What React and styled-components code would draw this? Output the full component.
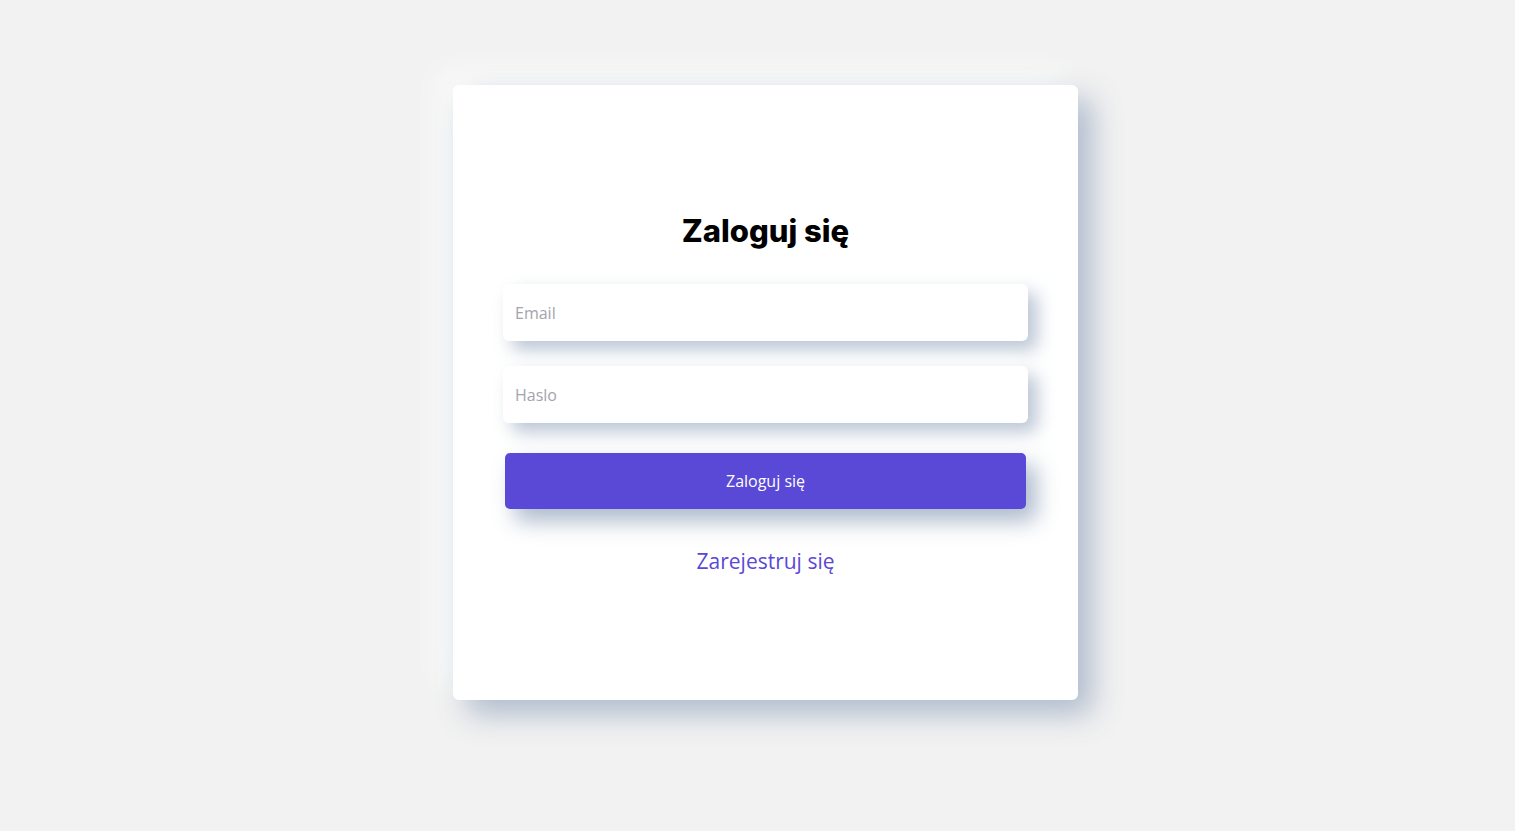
import React from 'react';
import styled, { createGlobalStyle } from 'styled-components';

const GlobalStyle = createGlobalStyle`
  body {
    margin: 0;
    background: #f2f2f2;
    font-family: "Open Sans", Roboto, sans-serif;
  }
`;

const StyledPage = styled.div`
  display: flex;
  justify-content: center;
  min-height: 831px;
  padding: 85px 0 0 16px;
  box-sizing: border-box;
`;

const StyledCard = styled.div`
  display: flex;
  flex-direction: column;
  justify-content: center;
  align-items: center;
  width: 625px;
  height: 615px;
  padding: 2px 50px 0;
  box-sizing: border-box;
  background: #fff;
  border-radius: 6px;
  box-shadow: 14px 14px 30px rgba(163, 177, 198, 0.85), -14px -14px 30px rgba(255, 255, 255, 0.7);
`;

const StyledTitle = styled.h1`
  margin: 0 0 35px;
  font-family: Inter, "Noto Sans", sans-serif;
  font-weight: 800;
  font-size: 31px;
  color: #000;
`;

const StyledInput = styled.input`
  width: 100%;
  height: 57px;
  margin-bottom: 25px;
  padding: 0 12px;
  box-sizing: border-box;
  border: none;
  outline: none;
  border-radius: 6px;
  background: #fff;
  font-family: "Open Sans", sans-serif;
  font-size: 16px;
  color: #333;
  box-shadow: 9px 9px 18px rgba(163, 177, 198, 0.75), -6px -6px 14px rgba(255, 255, 255, 0.6);

  &::placeholder {
    color: #a4a4ad;
  }
`;

const StyledButton = styled.button`
  width: 521px;
  height: 56px;
  margin-top: 5px;
  border: none;
  border-radius: 5px;
  background: #5a48d6;
  color: #fff;
  font-family: "Open Sans", sans-serif;
  font-size: 16px;
  cursor: pointer;
  box-shadow: 10px 12px 22px rgba(163, 177, 198, 0.9);
`;

const StyledLink = styled.a`
  margin-top: 38px;
  font-family: "Open Sans", sans-serif;
  font-size: 21px;
  color: #5a48d6;
  text-decoration: none;
  cursor: pointer;
`;

export default function App() {
  return (
    <>
      <GlobalStyle />
      <StyledPage>
        <StyledCard>
          <StyledTitle>Zaloguj się</StyledTitle>
          <StyledInput type="email" placeholder="Email" />
          <StyledInput type="password" placeholder="Haslo" />
          <StyledButton>Zaloguj się</StyledButton>
          <StyledLink>Zarejestruj się</StyledLink>
        </StyledCard>
      </StyledPage>
    </>
  );
}
